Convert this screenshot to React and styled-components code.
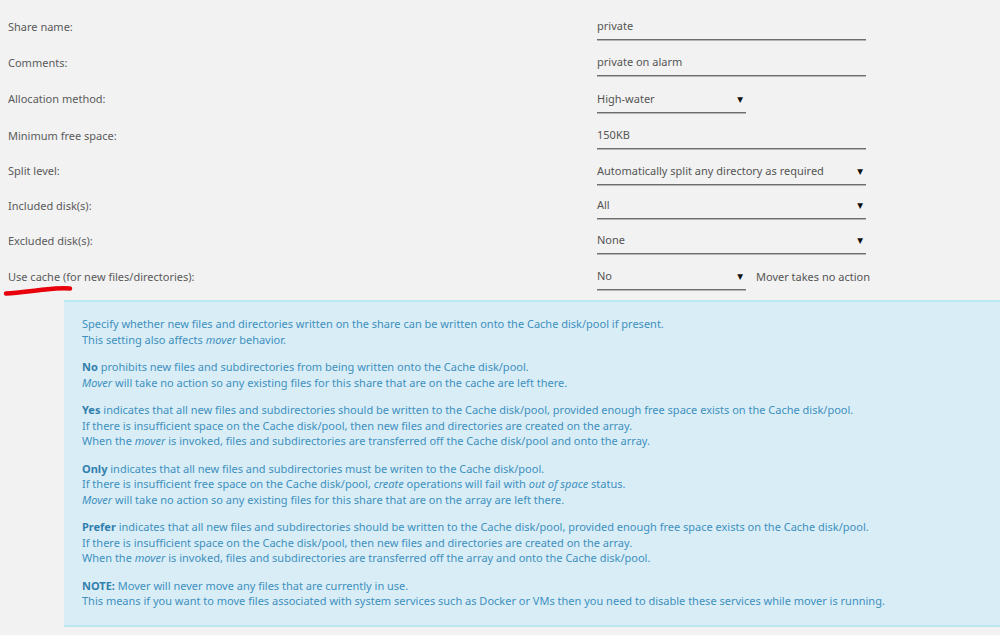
import React from 'react';
import styled, { createGlobalStyle } from 'styled-components';

const GlobalStyle = createGlobalStyle`
    html, body {
        margin: 0;
        padding: 0;
        background: #f2f2f2;
    }
    body {
        font-family: "Noto Sans", "Open Sans", sans-serif;
        width: 1000px;
        height: 635px;
        overflow: hidden;
    }
`

const Page = styled.div`
    position: relative;
    width: 1000px;
    height: 635px;
    background: #f2f2f2;
    overflow: hidden;
`

const Form = styled.div`
    padding: 8px 0 0 8px;
`

const Row = styled.div`
    display: flex;
    align-items: center;
    height: ${props => props.h || 36}px;
`

const Label = styled.div`
    width: 589px;
    font-size: 11px;
    color: #5a5a5a;
`

const Field = styled.div`
    display: flex;
    align-items: center;
    justify-content: space-between;
    box-sizing: border-box;
    width: ${props => props.short ? '149px' : '269px'};
    height: 28px;
    padding-right: 3px;
    border-bottom: 1px solid #6e6e6e;
    box-shadow: 0 1px 0 #b5b5b5;
    font-size: 11px;
    color: #555;
`

const Arrow = styled.span`
    font-family: "DejaVu Sans", sans-serif;
    font-size: 7.5px;
    color: #111;
    padding-top: 2px;
`

const Note = styled.span`
    margin-left: 10px;
    font-size: 11px;
    color: #555;
`

const HelpBox = styled.div`
    margin: 6px 0 0 64px;
    padding: 14px 18px 16px;
    background: #d9edf7;
    border-top: 2px solid #bce8f1;
    border-bottom: 2px solid #bce8f1;
    color: #4090bd;
    font-size: 11px;
    line-height: 15.5px;
`

const Para = styled.p`
    margin: 0 0 12px;
    &:last-child {
        margin-bottom: 0;
    }
    b {
        color: #317fac;
    }
`

const Scribble = styled.svg`
    position: absolute;
    left: 0;
    top: 280px;
`

const rows = [
    { label: 'Share name:', value: 'private' },
    { label: 'Comments:', value: 'private on alarm' },
    { label: 'Allocation method:', value: 'High-water', select: true, short: true, h: 37 },
    { label: 'Minimum free space:', value: '150KB' },
    { label: 'Split level:', value: 'Automatically split any directory as required', select: true, h: 35 },
    { label: 'Included disk(s):', value: 'All', select: true, h: 34 },
    { label: 'Excluded disk(s):', value: 'None', select: true },
    { label: 'Use cache (for new files/directories):', value: 'No', select: true, short: true, note: 'Mover takes no action' },
]

export default function App() {
    return (
        <Page>
            <GlobalStyle />
            <Form>
                {rows.map(row => (
                    <Row key={row.label} h={row.h}>
                        <Label>{row.label}</Label>
                        <Field short={row.short}>
                            <span>{row.value}</span>
                            {row.select && <Arrow>▼</Arrow>}
                        </Field>
                        {row.note && <Note>{row.note}</Note>}
                    </Row>
                ))}
            </Form>
            <Scribble width="80" height="20" viewBox="0 0 80 20">
                <path d="M6 13.5 C 20 12.5, 30 11, 45 9.5 C 55 8.5, 62 8, 70 8.5" stroke="#e8000b" strokeWidth="4.5" fill="none" strokeLinecap="round" />
            </Scribble>
            <HelpBox>
                <Para>
                    Specify whether new files and directories written on the share can be written onto the Cache disk/pool if present.<br />
                    This setting also affects <i>mover</i> behavior.
                </Para>
                <Para>
                    <b>No</b> prohibits new files and subdirectories from being written onto the Cache disk/pool.<br />
                    <i>Mover</i> will take no action so any existing files for this share that are on the cache are left there.
                </Para>
                <Para>
                    <b>Yes</b> indicates that all new files and subdirectories should be written to the Cache disk/pool, provided enough free space exists on the Cache disk/pool.<br />
                    If there is insufficient space on the Cache disk/pool, then new files and directories are created on the array.<br />
                    When the <i>mover</i> is invoked, files and subdirectories are transferred off the Cache disk/pool and onto the array.
                </Para>
                <Para>
                    <b>Only</b> indicates that all new files and subdirectories must be writen to the Cache disk/pool.<br />
                    If there is insufficient free space on the Cache disk/pool, <i>create</i> operations will fail with <i>out of space</i> status.<br />
                    <i>Mover</i> will take no action so any existing files for this share that are on the array are left there.
                </Para>
                <Para>
                    <b>Prefer</b> indicates that all new files and subdirectories should be written to the Cache disk/pool, provided enough free space exists on the Cache disk/pool.<br />
                    If there is insufficient space on the Cache disk/pool, then new files and directories are created on the array.<br />
                    When the <i>mover</i> is invoked, files and subdirectories are transferred off the array and onto the Cache disk/pool.
                </Para>
                <Para>
                    <b>NOTE:</b> Mover will never move any files that are currently in use.<br />
                    This means if you want to move files associated with system services such as Docker or VMs then you need to disable these services while mover is running.
                </Para>
            </HelpBox>
        </Page>
    )
}
